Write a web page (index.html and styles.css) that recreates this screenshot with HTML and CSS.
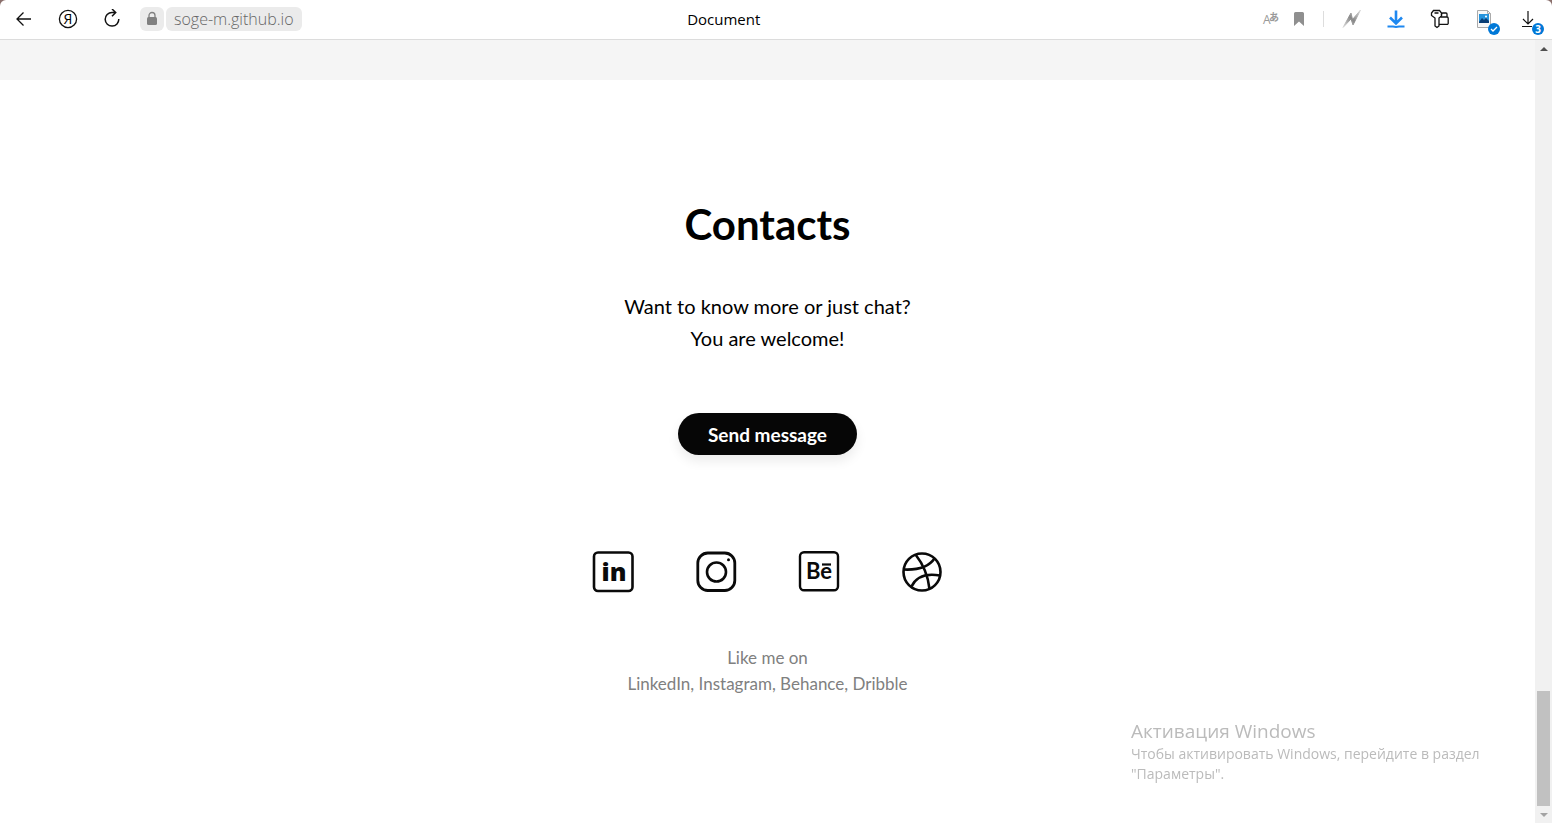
FILE: index.html
```html
<!DOCTYPE html>
<html lang="en">
<head>
    <meta charset="UTF-8">
    <meta name="viewport" content="width=device-width, initial-scale=1.0">
    <title>Document</title>
    <link rel="stylesheet" href="styles.css">
</head>
<body>
    <header class="toolbar">
        <button class="tool" aria-label="Back">
            <svg width="20" height="20" viewBox="0 0 20 20" fill="none" stroke="#111" stroke-width="1.300"><path d="M17 10H3.500M9.500 3.500 3 10l6.500 6.500"/></svg>
        </button>
        <button class="tool" aria-label="Yandex">
            <svg width="20" height="20" viewBox="0 0 20 20"><circle cx="10" cy="10" r="8.600" fill="none" stroke="#111" stroke-width="1.300"/><text class="ya" x="10" y="15" text-anchor="middle">Я</text></svg>
        </button>
        <button class="tool" aria-label="Reload">
            <svg width="20" height="20" viewBox="0 0 20 20" fill="none" stroke="#111" stroke-width="1.500"><path d="M16.800 10a6.800 6.800 0 1 1-6.800-6.500h3.500M10 0l3.700 3.500L10 7.200"/></svg>
        </button>
        <button class="lock" aria-label="Secure connection">
            <svg width="12" height="16" viewBox="0 0 12 16"><path d="M3 7V4.500a3 3 0 0 1 6 0V7" fill="none" stroke="#808080" stroke-width="1.300"/><rect x="1" y="6" width="10" height="8" rx="1.500" fill="#808080"/></svg>
        </button>
        <a class="address" href="#">soge-m.github.io</a>
        <span class="tab-title">Document</span>
        <button class="tool translate" aria-label="Translate">
            <svg width="20" height="20" viewBox="0 0 20 20" fill="#999"><text class="latin" x="2" y="15">A</text><text class="kana" x="8" y="12">あ</text></svg>
        </button>
        <button class="tool bookmark" aria-label="Bookmark">
            <svg width="12" height="16" viewBox="0 0 12 16"><path d="M1 2.500A1.500 1.500 0 0 1 2.500 1h7A1.500 1.500 0 0 1 11 2.500V15l-5-4.500L1 15z" fill="#8f8f8f"/></svg>
        </button>
        <span class="divider"></span>
        <button class="tool" aria-label="Turbo">
            <svg width="20" height="20" viewBox="0 0 20 20"><defs><linearGradient id="bolt" x1="0" y1="1" x2="1" y2="0"><stop offset="0" stop-color="#ddd"/><stop offset=".5" stop-color="#888"/><stop offset="1" stop-color="#ddd"/></linearGradient></defs><path d="M1 18.500 9 4l1.500 6.500L18.500 1 11 16l-2-6z" fill="url(#bolt)" stroke="url(#bolt)"/></svg>
        </button>
        <button class="tool" aria-label="Save from page">
            <svg width="20" height="20" viewBox="0 0 20 20" fill="none" stroke="#1e88f0" stroke-width="2.600"><path d="M10 1.500v13M4 8.500l6 6 6-6"/><path d="M1.500 17.500H7l3 .5 3-.5h5.500" stroke-width="1.800"/></svg>
        </button>
        <button class="tool" aria-label="Passwords">
            <svg width="20" height="20" viewBox="0 0 20 20" fill="none" stroke="#111" stroke-width="1.300"><path d="M3.500 1.500h6L11.500 4v3L9 9v8l-2 1.500L5 17V9L1.500 6.500V4zM4.500 4h4"/><path d="M11.500 6.500V5.200A1.200 1.200 0 0 1 12.700 4H16a1 1 0 0 1 1 1v2.500M10.500 8H17a1.200 1.200 0 0 1 1.200 1.200v5a1.200 1.200 0 0 1-1.200 1.200H9"/></svg>
        </button>
        <button class="tool" aria-label="Screenshots">
            <svg width="20" height="20" viewBox="0 0 20 20"><path d="M3.500 1.500h10l3 3v14h-13z" fill="#f8f8f8" stroke="#aaa"/><path d="M13.500 1.500v3h3" fill="none" stroke="#aaa"/><path d="M5 5h10v9H5z" fill="#2593dc"/><path d="m5 13 3-4 2 2 2-2 3 3v2H5z" fill="#0b3e75"/><circle cx="12" cy="7.500" r="1" fill="#fff"/></svg>
            <span class="badge badge-check"><svg width="8" height="8" viewBox="0 0 8 8"><path d="m1 4 2 2 4-4" fill="none" stroke="#fff" stroke-width="1.300"/></svg></span>
        </button>
        <button class="tool" aria-label="Downloads">
            <svg width="20" height="20" viewBox="0 0 20 20" fill="none" stroke="#111" stroke-width="1.200"><path d="M10 2v13M5 10l5 5 5-5M4 17.500h10"/></svg>
            <span class="badge badge-count">3</span>
        </button>
    </header>

    <div class="viewport">
        <main class="page">
            <div class="previous"></div>
            <section class="contacts">
                <h1>Contacts</h1>
                <p class="lead">Want to know more or just chat?<br>You are welcome!</p>
                <button class="send">Send message</button>
                <nav class="socials">
                    <a href="#" aria-label="LinkedIn">
                        <svg width="42" height="42" viewBox="0 0 42 42"><rect x="2" y="1.500" width="38.500" height="38.500" rx="4" fill="none" stroke="#0a0a0a" stroke-width="2.600"/><text class="in" x="22" y="30" text-anchor="middle">in</text></svg>
                    </a>
                    <a href="#" aria-label="Instagram">
                        <svg width="42" height="42" viewBox="0 0 42 42"><rect x="2.800" y="2" width="37" height="37.500" rx="10" fill="none" stroke="#0a0a0a" stroke-width="2.800"/><circle cx="21.500" cy="21" r="9.500" fill="none" stroke="#0a0a0a" stroke-width="2.600"/><circle cx="33.500" cy="8.800" r="1.500"/></svg>
                    </a>
                    <a href="#" aria-label="Behance">
                        <svg width="42" height="42" viewBox="0 0 42 42"><rect x="2" y="1.200" width="38" height="38" rx="4" fill="none" stroke="#0a0a0a" stroke-width="2.400"/><text class="be" x="21" y="28" text-anchor="middle">Be</text><path d="M24 13.500h9" stroke="#0a0a0a" stroke-width="2.200"/></svg>
                    </a>
                    <a href="#" aria-label="Dribble">
                        <svg width="42" height="42" viewBox="0 0 42 42" fill="none" stroke="#0a0a0a" stroke-width="2.600"><circle cx="21" cy="21" r="18.500"/><path d="M14.500 3.500C22 13 27 24 28.500 38M3 18.500C14 19 27 17 33.500 7.500M10.500 35.500C15 26 25 22 39 24.500"/></svg>
                    </a>
                </nav>
                <p class="note">Like me on<br>LinkedIn, Instagram, Behance, Dribble</p>
            </section>
        </main>
        <div class="scrollbar">
            <button class="scroll-arrow" aria-label="Scroll up"><svg width="8" height="4" viewBox="0 0 8 4"><path d="M0 4 4 0l4 4z" fill="#505050"/></svg></button>
            <div class="thumb"></div>
            <button class="scroll-arrow" aria-label="Scroll down"><svg width="8" height="4" viewBox="0 0 8 4"><path d="m0 0 4 4 4-4z" fill="#a3a3a3"/></svg></button>
        </div>
    </div>

    <aside class="watermark" lang="ru">
        <strong>Активация Windows</strong>
        <p>Чтобы активировать Windows, перейдите в раздел "Параметры".</p>
    </aside>
</body>
</html>
```
FILE: styles.css
```css
* {
    box-sizing: border-box;
}
body {
    margin: 0;
    height: 100vh;
    display: flex;
    flex-direction: column;
    overflow: hidden;
    background: #8a6f6c;
    font-family: Lato, sans-serif;
    color: #000;
}
button {
    border: none;
    padding: 0;
    background: none;
    font-family: inherit;
    cursor: pointer;
}
svg {
    display: block;
}

/* browser bar */
.toolbar {
    display: flex;
    align-items: center;
    height: 40px;
    padding: 0 2px 2px;
    background: #fff;
    border-bottom: 1px solid #dcdcdc;
    border-radius: 6px 6px 0 0;
    font-family: "Open Sans", sans-serif;
}
.tool {
    position: relative;
    display: flex;
    justify-content: center;
    align-items: center;
    width: 44px;
    height: 36px;
}
.translate {
    width: 30px;
}
.bookmark {
    width: 26px;
}
.ya {
    font: 14px "Open Sans", sans-serif;
}
.latin {
    font: 12px "Open Sans", sans-serif;
}
.kana {
    font: bold 10px "Noto Sans CJK JP", sans-serif;
}
.in {
    font: 800 25px "Open Sans", sans-serif;
    fill: #0a0a0a;
}
.be {
    font: bold 22px Lato, sans-serif;
    fill: #0a0a0a;
}
.lock {
    display: flex;
    justify-content: center;
    align-items: center;
    width: 24px;
    height: 24px;
    margin: 0 2px 0 6px;
    background: #ebebeb;
    border-radius: 6px;
}
.address {
    padding: 0 8px;
    line-height: 24px;
    font-size: 16px;
    font-weight: 300;
    color: #666;
    background: #ebebeb;
    border-radius: 6px;
    text-decoration: none;
}
.tab-title {
    flex: 1;
    padding-right: 110px;
    text-align: center;
    font-size: 15px;
}
.divider {
    width: 1px;
    height: 16px;
    margin: 0 6px 0 11px;
    background: #ddd;
}
.badge {
    position: absolute;
    right: 6px;
    bottom: 2px;
    display: flex;
    justify-content: center;
    align-items: center;
    width: 12px;
    height: 12px;
    border-radius: 50%;
    background: #0078d7;
    color: #fff;
    font-size: 10px;
    font-weight: bold;
}

/* page */
.viewport {
    flex: 1;
    display: flex;
    min-height: 0;
    background: #fff;
}
.page {
    flex: 1;
    overflow: hidden;
}
.previous {
    height: 40px;
    background: #f5f5f5;
}
.contacts {
    display: flex;
    flex-direction: column;
    align-items: center;
    padding: 120px 20px;
    text-align: center;
}
h1 {
    margin: 0 0 42px;
    font-size: 42px;
    line-height: 48px;
}
.lead {
    margin: 0 0 59px;
    font-size: 20px;
    line-height: 32px;
}
.send {
    height: 42px;
    padding: 0 30px;
    border-radius: 21px;
    background: #060606;
    color: #fff;
    font-size: 19px;
    font-weight: bold;
    box-shadow: 0 6px 12px rgba(0, 0, 0, 0.08);
}
.socials {
    display: flex;
    gap: 61px;
    margin: 96px 0 52px;
}
.socials a {
    color: #0a0a0a;
}
.note {
    margin: 0;
    font-size: 17px;
    line-height: 26px;
    color: #808080;
}

.scrollbar {
    display: flex;
    flex-direction: column;
    align-items: center;
    width: 17px;
    background: #f1f1f1;
}
.scroll-arrow {
    display: flex;
    justify-content: center;
    align-items: center;
    width: 17px;
    height: 17px;
}
.thumb {
    width: 13px;
    height: 115px;
    margin-top: auto;
    background: #c1c1c1;
}

.watermark {
    position: fixed;
    right: 61px;
    bottom: 39px;
    width: 360px;
    font-family: "Open Sans", sans-serif;
    color: #bbb;
}
.watermark strong {
    display: block;
    font-size: 19px;
    font-weight: normal;
    line-height: 26px;
}
.watermark p {
    margin: 0;
    font-size: 14px;
    line-height: 20px;
}
```
